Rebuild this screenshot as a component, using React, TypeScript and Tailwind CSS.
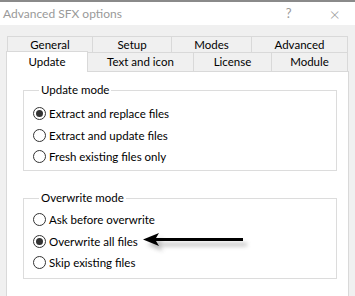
import React from 'react'

const font = { fontFamily: 'Lato, "Noto Sans", Arial, sans-serif' }

function Radio({ label, checked, children }: { label: string; checked?: boolean; children?: React.ReactNode }) {
  return (
    <div className="flex items-center h-[21.5px]">
      <span className="w-[13px] h-[13px] rounded-full border border-[#333] bg-white flex items-center justify-center shrink-0">
        {checked && <span className="w-[7px] h-[7px] rounded-full bg-[#333]" />}
      </span>
      <span className="ml-[3px] text-[11.5px] text-black leading-none">{label}</span>
      {children}
    </div>
  )
}

function Arrow() {
  return (
    <svg width="112" height="26" viewBox="0 0 112 26" className="ml-[4px] mt-[4px] shrink-0">
      <defs>
        <filter id="sh" x="-20%" y="-50%" width="140%" height="200%">
          <feGaussianBlur stdDeviation="2" />
        </filter>
      </defs>
      <g filter="url(#sh)" opacity="0.45" transform="translate(4,5)">
        <path d="M1 9.5 L17 3 L14 8 L101 8 L101 11 L14 11 L17 16 Z" fill="#666" />
      </g>
      <path d="M1 9.5 L17 3 L14 8 L101 8 L101 11 L14 11 L17 16 Z" fill="#000" />
    </svg>
  )
}

export default function App() {
  const row1 = [
    ['General', 'w-[86px]'],
    ['Setup', 'w-[79px]'],
    ['Modes', 'w-[80px]'],
    ['Advanced', 'w-[96px]'],
  ]
  const row2 = [
    ['Text and icon', 'w-[106px]'],
    ['License', 'w-[78px]'],
    ['Module', 'w-[76px]'],
  ]
  return (
    <div className="w-[355px] h-[296px] bg-[#f0f0f0] overflow-hidden flex flex-col" style={font}>
      <div className="h-[2px] bg-[#8a8a8a] shrink-0" />
      <div className="h-[23px] bg-white flex items-center shrink-0">
        <span className="ml-[3px] text-[12px] text-[#999]">Advanced SFX options</span>
        <span className="ml-auto mr-[38px] text-[13px] text-[#999]">?</span>
        <span className="mr-[15px] text-[18px] font-light text-[#999] leading-none">×</span>
      </div>
      <div className="flex flex-col flex-1 pt-[11px]">
        <div className="flex ml-[7px] h-[16px]">
          {row1.map(([t, w]) => (
            <div key={t} className={`${w} border-t border-r border-[#d9d9d9] first:border-l flex items-center justify-center text-[11.5px] text-black`}>
              {t}
            </div>
          ))}
        </div>
        <div className="flex ml-[6px] h-[19px] relative z-10">
          <div className="w-[82px] h-[21px] -mt-[1px] bg-white border border-b-0 border-[#d9d9d9] flex items-start justify-center pt-[1px] text-[11.5px] text-black">
            Update
          </div>
          {row2.map(([t, w]) => (
            <div key={t} className={`${w} border-t border-r border-[#d9d9d9] flex items-center justify-center text-[11.5px] text-black`}>
              {t}
            </div>
          ))}
        </div>
        <div className="ml-[6px] w-[343px] flex-1 bg-white border border-[#d9d9d9] border-b-0 pl-[16px] pt-[10px]">
          <fieldset className="w-[314px] h-[89px] border border-[#dcdcdc] pl-[9px] pt-[5px]">
            <legend className="ml-[6px] px-[2px] text-[11.5px] text-black leading-[16px]">Update mode</legend>
            <Radio label="Extract and replace files" checked />
            <Radio label="Extract and update files" />
            <Radio label="Fresh existing files only" />
          </fieldset>
          <fieldset className="mt-[19px] w-[314px] h-[89px] border border-[#dcdcdc] pl-[9px] pt-[3px]">
            <legend className="ml-[6px] px-[2px] text-[11.5px] text-black leading-[16px]">Overwrite mode</legend>
            <Radio label="Ask before overwrite" />
            <Radio label="Overwrite all files" checked>
              <Arrow />
            </Radio>
            <Radio label="Skip existing files" />
          </fieldset>
        </div>
      </div>
    </div>
  )
}
